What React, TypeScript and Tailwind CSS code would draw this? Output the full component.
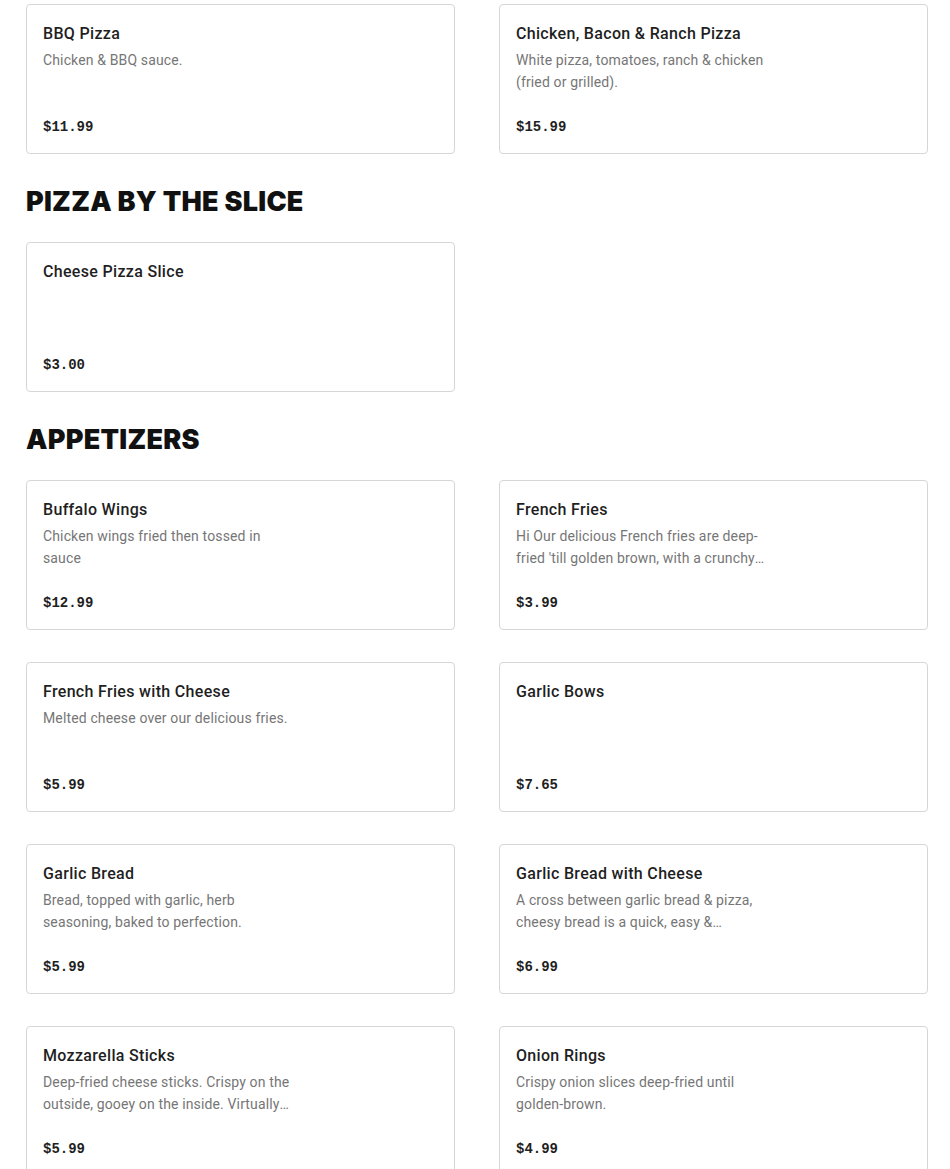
type Item = {
  name: string;
  description?: string;
  price: string;
};

const pizzas: Item[] = [
  { name: "BBQ Pizza", description: "Chicken & BBQ sauce.", price: "$11.99" },
  {
    name: "Chicken, Bacon & Ranch Pizza",
    description: "White pizza, tomatoes, ranch & chicken (fried or grilled).",
    price: "$15.99",
  },
];

const slices: Item[] = [{ name: "Cheese Pizza Slice", price: "$3.00" }];

const appetizers: Item[] = [
  {
    name: "Buffalo Wings",
    description: "Chicken wings fried then tossed in sauce",
    price: "$12.99",
  },
  {
    name: "French Fries",
    description:
      "Hi Our delicious French fries are deep-fried 'till golden brown, with a crunchy outside and a fluffy inside.",
    price: "$3.99",
  },
  {
    name: "French Fries with Cheese",
    description: "Melted cheese over our delicious fries.",
    price: "$5.99",
  },
  { name: "Garlic Bows", price: "$7.65" },
  {
    name: "Garlic Bread",
    description: "Bread, topped with garlic, herb seasoning, baked to perfection.",
    price: "$5.99",
  },
  {
    name: "Garlic Bread with Cheese",
    description:
      "A cross between garlic bread & pizza, cheesy bread is a quick, easy & delicious side.",
    price: "$6.99",
  },
  {
    name: "Mozzarella Sticks",
    description:
      "Deep-fried cheese sticks. Crispy on the outside, gooey on the inside. Virtually irresistible.",
    price: "$5.99",
  },
  {
    name: "Onion Rings",
    description: "Crispy onion slices deep-fried until golden-brown.",
    price: "$4.99",
  },
];

function MenuCard({ item }: { item: Item }) {
  return (
    <div className="flex h-[150px] flex-col justify-between rounded border border-[#d6d6d6] bg-white p-4">
      <div>
        <h3 className="mt-px text-base leading-6 font-medium tracking-[0.02em] text-[#1f1f1f]">
          {item.name}
        </h3>
        {item.description && (
          <p className="mt-[3px] line-clamp-2 w-[252px] text-sm leading-[22px] tracking-[0.01em] text-[#767676]">
            {item.description}
          </p>
        )}
      </div>
      <span className="font-['Liberation_Mono',monospace] text-sm leading-5 font-bold text-[#1f1f1f]">
        {item.price}
      </span>
    </div>
  );
}

function Section({ title, items }: { title?: string; items: Item[] }) {
  return (
    <section>
      {title && (
        <h2 className="mt-8 mb-6 font-['Inter',sans-serif] text-[27px] leading-8 font-black tracking-[0.01em] text-[#111] uppercase">
          {title}
        </h2>
      )}
      <div className="grid grid-cols-2 gap-x-[44px] gap-y-8">
        {items.map((item) => (
          <MenuCard key={item.name} item={item} />
        ))}
      </div>
    </section>
  );
}

export default function App() {
  return (
    <div className="min-h-screen bg-white pt-1 pr-[22px] pb-8 pl-[26px] font-['Roboto',sans-serif]">
      <Section items={pizzas} />
      <Section title="Pizza by the Slice" items={slices} />
      <Section title="Appetizers" items={appetizers} />
    </div>
  );
}
